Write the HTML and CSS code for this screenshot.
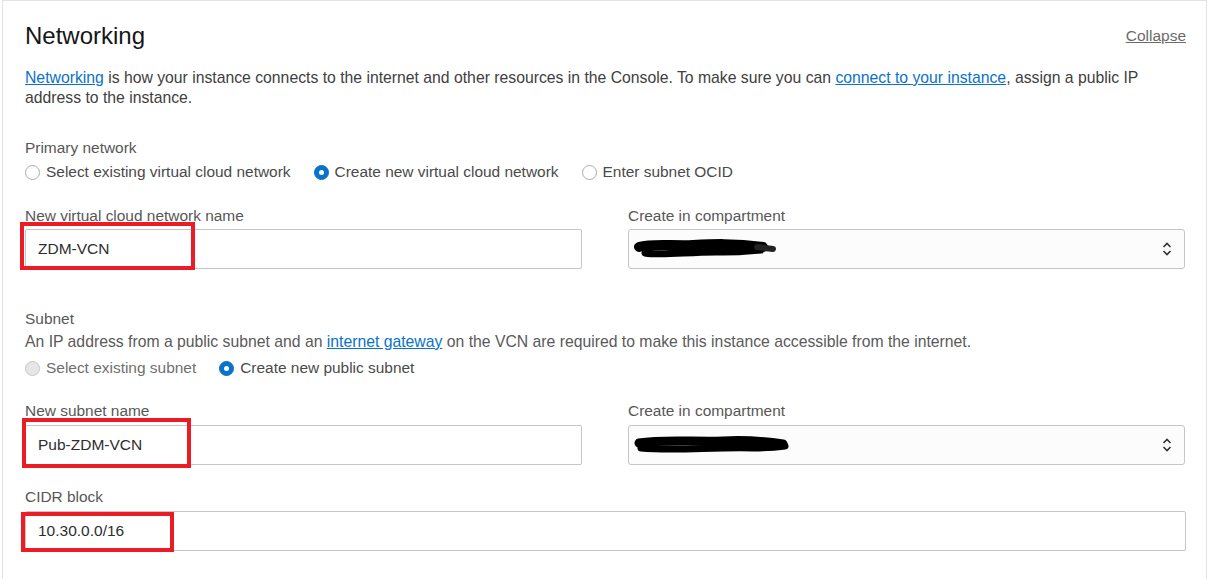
FILE: index.html
```html
<!DOCTYPE html>
<html lang="en">
<head>
<meta charset="utf-8">
<title>Networking</title>
<link rel="stylesheet" href="styles.css">
</head>
<body>
<section class="panel">
  <header class="panel-head">
    <h2 class="title">Networking</h2>
    <a class="collapse" href="#">Collapse</a>
  </header>
  <p class="desc"><a class="link" href="#">Networking</a> is how your instance connects to the internet and other resources in the Console. To make sure you can <a class="link" href="#">connect to your instance</a>, assign a public IP address to the instance.</p>

  <div class="group primary">
    <div class="label">Primary network</div>
    <div class="radios">
      <label class="radio"><span class="dot"></span>Select existing virtual cloud network</label>
      <label class="radio"><span class="dot checked"></span>Create new virtual cloud network</label>
      <label class="radio"><span class="dot"></span>Enter subnet OCID</label>
    </div>
  </div>

  <div class="row row-vcn">
    <div class="field">
      <div class="label">New virtual cloud network name</div>
      <div class="mark-wrap">
        <div class="input">ZDM-VCN</div>
        <span class="mark mark-vcn"></span>
      </div>
    </div>
    <div class="field">
      <div class="label">Create in compartment</div>
      <div class="select">
        <svg class="redact" width="150" height="24" viewBox="0 0 150 24"><path d="M6 10 C20 6 40 9 60 8 C80 7 100 6 130 10" stroke="#000" stroke-width="10" fill="none" stroke-linecap="round"/><path d="M12 16 C30 19 60 14 90 15 C105 15 118 14 128 13" stroke="#000" stroke-width="7" fill="none" stroke-linecap="round"/><path d="M124 10 L140 12" stroke="#222" stroke-width="6" stroke-linecap="round"/></svg>
        <svg class="chev" width="10" height="16" viewBox="0 0 10 16"><path d="M1.5 6 L5 2.5 L8.5 6" stroke="#333" stroke-width="1.6" fill="none"/><path d="M1.5 10 L5 13.5 L8.5 10" stroke="#333" stroke-width="1.6" fill="none"/></svg>
      </div>
    </div>
  </div>

  <div class="group subnet">
    <div class="label">Subnet</div>
    <div class="hint">An IP address from a public subnet and an <a class="link" href="#">internet gateway</a> on the VCN are required to make this instance accessible from the internet.</div>
    <div class="radios">
      <label class="radio disabled"><span class="dot disabled"></span>Select existing subnet</label>
      <label class="radio"><span class="dot checked"></span>Create new public subnet</label>
    </div>
  </div>

  <div class="row row-subnet">
    <div class="field">
      <div class="label">New subnet name</div>
      <div class="mark-wrap">
        <div class="input">Pub-ZDM-VCN</div>
        <span class="mark mark-sub"></span>
      </div>
    </div>
    <div class="field">
      <div class="label">Create in compartment</div>
      <div class="select">
        <svg class="redact" width="160" height="24" viewBox="0 0 160 24"><path d="M6 10 C30 6 60 9 90 8 C110 7 130 8 150 11" stroke="#000" stroke-width="9" fill="none" stroke-linecap="round"/><path d="M8 15 C40 18 80 14 120 15 C135 15 145 14 152 13" stroke="#000" stroke-width="7" fill="none" stroke-linecap="round"/></svg>
        <svg class="chev" width="10" height="16" viewBox="0 0 10 16"><path d="M1.5 6 L5 2.5 L8.5 6" stroke="#333" stroke-width="1.6" fill="none"/><path d="M1.5 10 L5 13.5 L8.5 10" stroke="#333" stroke-width="1.6" fill="none"/></svg>
      </div>
    </div>
  </div>

  <div class="field full">
    <div class="label">CIDR block</div>
    <div class="mark-wrap">
      <div class="input">10.30.0.0/16</div>
      <span class="mark mark-cidr"></span>
    </div>
  </div>
</section>
</body>
</html>
```

FILE: styles.css
```css
* { box-sizing: border-box; }
html, body { margin: 0; padding: 0; background: #fff; }
body {
  font-family: "Liberation Sans", Arial, sans-serif;
  font-size: 15px;
  color: #3d3d3d;
  width: 1210px;
  height: 579px;
  overflow: hidden;
}
.panel {
  margin-left: 2px;
  width: 1205px;
  min-height: 600px;
  border: 1px solid #e2e3e5;
  border-bottom: none;
  padding: 21px 20px 0 22px;
}
.panel-head {
  display: flex;
  justify-content: space-between;
  align-items: center;
  height: 28px;
}
.title {
  margin: 0;
  font-size: 24px;
  font-weight: normal;
  color: #161616;
  line-height: 28px;
}
.collapse {
  color: #6b6b6b;
  font-size: 15.5px;
  text-decoration: underline;
  margin-right: 0;
}
.desc {
  margin: 18px 0 0;
  line-height: 19.5px;
  font-size: 15.75px;
  color: #404040;
}
.link { color: #0a72c9; text-decoration: underline; }
.label {
  color: #575757;
  line-height: 20px;
  font-size: 15.45px;
}
.hint {
  margin-top: 3px;
  line-height: 20px;
  font-size: 15.75px;
  color: #5a5a5a;
}
.group.primary { margin-top: 31px; }
.group.subnet { margin-top: 40px; }
.radios {
  display: flex;
  gap: 23px;
  margin-top: 4px;
  height: 20px;
  align-items: center;
}
.subnet .radios { margin-top: 6px; }
.radio {
  display: flex;
  align-items: center;
  gap: 6px;
  color: #4a4a4a;
  font-size: 15.45px;
  line-height: 20px;
}
.radio.disabled { color: #6f6f6f; }
.dot {
  width: 15px;
  height: 15px;
  border-radius: 50%;
  border: 1px solid #a9abae;
  background: #fff;
  flex: none;
  position: relative;
}
.dot.checked {
  background: #0a72c9;
  border-color: #0a72c9;
}
.dot.checked::after {
  content: "";
  position: absolute;
  left: 4px;
  top: 4px;
  width: 5px;
  height: 5px;
  border-radius: 50%;
  background: #fff;
}
.dot.disabled {
  background: #e6e6e6;
  border-color: #c6c7c9;
}
.row {
  display: grid;
  grid-template-columns: 557px 557px;
  column-gap: 46px;
}
.row-vcn { margin-top: 24px; }
.row-subnet { margin-top: 23px; }
.field .label { margin-bottom: 4px; }
.row-vcn .field .label { margin-bottom: 3px; }
.row-subnet .field .label { margin-bottom: 4px; }
.full { margin-top: 22px; width: 1161px; }
.mark-wrap { position: relative; }
.input {
  height: 40px;
  border: 1px solid #c3c5c8;
  border-radius: 2px;
  background: #fff;
  padding: 0 12px;
  display: flex;
  align-items: center;
  color: #2e2e2e;
  font-size: 15.5px;
}
.select {
  height: 40px;
  border: 1px solid #c3c5c8;
  border-radius: 3px;
  background: #fcfcfc;
  padding: 0 12px 0 4px;
  display: flex;
  align-items: center;
  justify-content: space-between;
}
.redact { display: block; }
.chev { display: block; }
.mark {
  position: absolute;
  border: 4px solid #ec1c24;
  pointer-events: none;
}
.mark-vcn { left: -5px; top: -7px; width: 175px; height: 48px; }
.mark-sub { left: -3px; top: -7px; width: 169px; height: 50px; }
.mark-cidr { left: -4px; top: 1px; width: 153px; height: 40px; }
```
